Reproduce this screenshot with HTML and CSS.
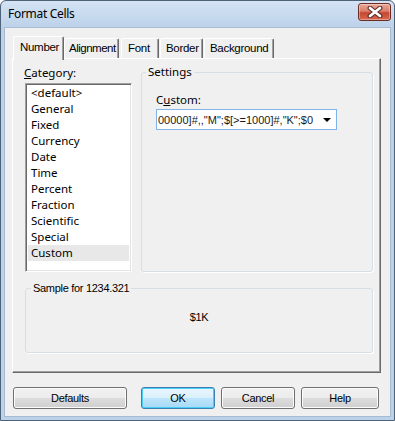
FILE: index.html
```html
<!DOCTYPE html>
<html>
<head>
  <meta charset="UTF-8">
  <title>Format Cells</title>
  <link rel="stylesheet" href="styles.css">
</head>
<body>
  <div class="window">
    <div class="titlebar">
      <span class="title">Format Cells</span>
      <div class="close">
        <svg width="16" height="12" viewBox="0 0 16 12">
          <path d="M3 2 L13 10 M13 2 L3 10" stroke="#5a2a24" stroke-width="4.8" stroke-linecap="round"/>
          <path d="M3 2 L13 10 M13 2 L3 10" stroke="#ffffff" stroke-width="2.8" stroke-linecap="round"/>
        </svg>
      </div>
    </div>

    <div class="client">
      <div class="tabs">
        <div class="tab active">Number</div>
        <div class="tab tab-align">Alignment</div>
        <div class="tab tab-font">Font</div>
        <div class="tab tab-border">Border</div>
        <div class="tab tab-bg">Background</div>
      </div>

      <div class="panel">
        <div class="top-row">
          <div class="category">
            <div class="label"><u>C</u>ategory:</div>
            <ul class="list">
              <li>&lt;default&gt;</li>
              <li>General</li>
              <li>Fixed</li>
              <li>Currency</li>
              <li>Date</li>
              <li>Time</li>
              <li>Percent</li>
              <li>Fraction</li>
              <li>Scientific</li>
              <li>Special</li>
              <li class="selected">Custom</li>
            </ul>
          </div>

          <fieldset class="group settings">
            <legend>Settings</legend>
            <div class="label">C<u>u</u>stom:</div>
            <div class="combo">
              <span class="combo-text">00000]#,,"M";$[&gt;=1000]#,"K";$0</span>
              <span class="arrow"></span>
            </div>
          </fieldset>
        </div>

        <fieldset class="group sample">
          <legend>Sample for 1234.321</legend>
          <div class="sample-value">$1K</div>
        </fieldset>
      </div>

      <div class="buttons">
        <div class="btn btn-defaults">Defaults</div>
        <div class="btn btn-ok">OK</div>
        <div class="btn btn-cancel">Cancel</div>
        <div class="btn btn-help">Help</div>
      </div>
    </div>
  </div>
</body>
</html>
```

FILE: styles.css
```css
body {
  margin: 0;
  background: #ffffff;
  font-family: "Liberation Sans", Arial, sans-serif;
  font-size: 11px;
  color: #000;
}
.window {
  box-sizing: border-box;
  width: 395px;
  height: 421px;
  border: 1px solid #4f6378;
  border-radius: 6px 6px 0 0;
  background: linear-gradient(#d4e3f4 0, #bcd2ea 26px, #bcd2ea 100%);
  padding: 0 3px 3px;
  display: flex;
  flex-direction: column;
}
.titlebar {
  height: 26px;
  display: flex;
  align-items: center;
  justify-content: space-between;
}
.title {
  font-family: "Noto Sans", sans-serif;
  font-size: 12px;
  margin-left: 4px;
  margin-top: -1px;
  letter-spacing: -0.3px;
}
.close {
  box-sizing: border-box;
  width: 33px;
  height: 18px;
  margin-top: -4px;
  border: 1px solid #6e2b24;
  border-radius: 3px;
  background: linear-gradient(#e9a899 0, #d7806c 45%, #c64631 55%, #d66a4f 100%);
  box-shadow: inset 0 0 0 1px rgba(255, 255, 255, 0.35);
  display: flex;
  align-items: center;
  justify-content: center;
}
.client {
  flex: 1;
  background: #f0f0f0;
  border: 1px solid #a7bbd2;
  display: flex;
  flex-direction: column;
}

/* tabs */
.tabs {
  display: flex;
  align-items: flex-end;
  height: 22px;
  margin-top: 8px;
  margin-left: 8px;
}
.tab {
  box-sizing: border-box;
  height: 20px;
  line-height: 18px;
  padding-left: 5px;
  background: #f0f0f0;
  border-top: 1px solid #fff;
  border-left: 1px solid #fff;
  border-right: 1px solid #696969;
  box-shadow: inset -1px 0 #a0a0a0;
  border-radius: 2px 2px 0 0;
  white-space: nowrap;
  overflow: hidden;
  font-size: 11.5px;
  letter-spacing: -0.3px;
}
.tab.active {
  position: relative;
  z-index: 1;
  width: 51px;
  height: 24px;
  margin-bottom: -2px;
  line-height: 20px;
  padding-left: 6px;
}
.tab-align { width: 55px; padding-left: 4px; letter-spacing: -0.5px; }
.tab-font { width: 38px; margin-left: 2px; padding-left: 6px; }
.tab-border { width: 43px; margin-left: 1px; padding-left: 5px; }
.tab-bg { width: 70px; margin-left: 1px; }

/* panel */
.panel {
  box-sizing: border-box;
  height: 315px;
  margin: 0 9px 0 7px;
  border-top: 1px solid #fff;
  border-left: 1px solid #fff;
  border-right: 1px solid #696969;
  border-bottom: 1px solid #696969;
  box-shadow: inset -1px -1px #a0a0a0;
  padding: 6px 0 0 12px;
}
.top-row {
  display: flex;
}
.label {
  font-family: "Noto Sans", sans-serif;
  font-size: 11.5px;
  line-height: 14px;
}
.category {
  width: 107px;
}
.category .label {
  margin: 1px 0 3px -1px;
}
.list {
  box-sizing: border-box;
  height: 189px;
  margin: 0;
  padding: 1px 0 0;
  list-style: none;
  background: #fff;
  border: 1px solid;
  border-color: #a0a0a0 #fff #fff #a0a0a0;
  box-shadow: inset 1px 1px #696969, inset -1px -1px #e3e3e3;
  font-family: "Noto Sans", sans-serif;
  font-size: 11.5px;
}
.list li {
  height: 16px;
  line-height: 16px;
  margin: 0 2px;
  padding-left: 3px;
}
.list li.selected {
  background: #e8e8e8;
}

/* group boxes */
.group {
  box-sizing: border-box;
  margin: 0;
  padding: 0;
  border: 1px solid #d5dfe5;
  border-radius: 3px;
  box-shadow: 1px 1px 0 #fff;
  min-width: 0;
}
.group legend {
  padding: 0 2px;
  line-height: 14px;
}
.settings {
  width: 232px;
  height: 207px;
  margin-left: 9px;
  padding-left: 14px;
}
.settings legend {
  margin-left: -10px;
  font-family: "Noto Sans", sans-serif;
  font-size: 11.5px;
}
.settings .label {
  margin-top: 14px;
}
.combo {
  box-sizing: border-box;
  width: 181px;
  height: 21px;
  margin-top: 2px;
  background: #fff;
  border: 1px solid #7eb4ea;
  display: flex;
  align-items: center;
}
.combo-text {
  flex: 1;
  padding-left: 1px;
  white-space: nowrap;
  overflow: hidden;
  color: #1a1a1a;
}
.arrow {
  width: 0;
  height: 0;
  margin: 1px 5px 0 4px;
  border-left: 4px solid transparent;
  border-right: 4px solid transparent;
  border-top: 4px solid #000;
}
.sample {
  width: 348px;
  height: 72px;
  margin-top: 9px;
}
.sample legend {
  margin-left: 5px;
  letter-spacing: -0.3px;
}
.sample-value {
  margin-top: 15px;
  line-height: 14px;
  text-align: center;
  letter-spacing: -0.3px;
}

/* buttons */
.buttons {
  display: flex;
  margin-top: 14px;
  margin-left: 8px;
}
.btn {
  box-sizing: border-box;
  height: 22px;
  line-height: 20px;
  text-align: center;
  border: 1px solid #707070;
  border-radius: 3px;
  background: linear-gradient(#f2f2f2 0, #ebebeb 50%, #dddddd 50%, #cfcfcf 100%);
  box-shadow: inset 0 0 0 1px #fcfcfc;
  letter-spacing: -0.3px;
}
.btn-defaults { width: 114px; }
.btn-ok {
  width: 74px;
  margin-left: 14px;
  border-color: #3c7fb1;
  background: linear-gradient(#eaf6fd 0, #d9f0fc 50%, #bee6fd 50%, #a7d9f5 100%);
  box-shadow: inset 0 0 0 1px #48d0f8;
}
.btn-cancel { width: 74px; margin-left: 6px; }
.btn-help { width: 78px; margin-left: 6px; }
```
